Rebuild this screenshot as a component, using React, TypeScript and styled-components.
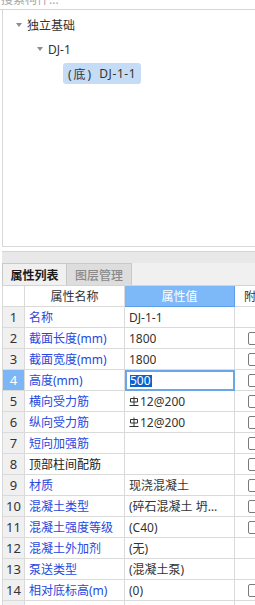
import styled, { createGlobalStyle } from 'styled-components';

const GlobalStyle = createGlobalStyle`
  html, body {
    margin: 0;
    padding: 0;
    background: #ffffff;
    overflow: hidden;
  }
  body {
    font-family: "Noto Sans", "Noto Sans CJK SC", sans-serif;
    font-size: 12px;
    color: #333333;
  }
`;

const Page = styled.div`
  width: 255px;
  height: 605px;
  overflow: hidden;
  display: flex;
  flex-direction: column;
`;

const SearchBar = styled.div`
  height: 10px;
  flex: none;
  box-sizing: border-box;
  border-bottom: 1px solid #d6d6d6;
  overflow: hidden;
`;

const SearchText = styled.div`
  margin-top: -8px;
  padding-left: 1px;
  line-height: 16px;
  color: #a6a6a6;
  white-space: nowrap;
`;

const TreePanel = styled.div`
  height: 237px;
  flex: none;
  box-sizing: border-box;
  margin-left: 2px;
  padding-top: 3px;
  border-left: 1px solid #d9d9d9;
  border-bottom: 1px solid #d9d9d9;
  background: #ffffff;
`;

const TreeRow = styled.div<{ $level: number }>`
  height: 24px;
  display: flex;
  align-items: center;
  padding-left: ${(p) => 13 + p.$level * 21}px;
  color: #333333;
  white-space: nowrap;
`;

const Caret = styled.span`
  width: 0;
  height: 0;
  margin-right: 5px;
  border-left: 3px solid transparent;
  border-right: 3px solid transparent;
  border-top: 4px solid #8c8c8c;
`;

const Selected = styled.span`
  display: flex;
  align-items: center;
  height: 21px;
  margin-top: 1px;
  margin-left: 26px;
  padding: 0 5px 0 5px;
  border-radius: 3px;
  background: #c5dcf6;
  color: #333333;
`;

const Kind = styled.span`
  letter-spacing: 2px;
`;

const Code = styled.span`
  margin-left: 6px;
  letter-spacing: 0.6px;
`;

const Gap = styled.div`
  height: 4px;
  flex: none;
`;

const Splitter = styled.div`
  height: 12px;
  flex: none;
  box-sizing: border-box;
  margin-left: 2px;
  border-top: 1px solid #d4d4d4;
  background: #e8e8e8;
`;

const TabBar = styled.div`
  height: 23px;
  flex: none;
  box-sizing: border-box;
  margin-left: 2px;
  display: flex;
  background: #f0f0f0;
  border-bottom: 1px solid #d4d4d4;
`;

const Tab = styled.div<{ $active?: boolean }>`
  width: 65px;
  box-sizing: border-box;
  display: flex;
  align-items: center;
  justify-content: center;
  border: 1px solid #c9c9c9;
  border-bottom: none;
  border-left: ${(p) => (p.$active ? '1px solid #c9c9c9' : 'none')};
  background: ${(p) => (p.$active ? '#f0f0f0' : '#dddddd')};
  color: ${(p) => (p.$active ? '#1a1a1a' : '#8a8a8a')};
  font-weight: ${(p) => (p.$active ? 600 : 500)};
`;

const Table = styled.div`
  margin-left: 2px;
  border-left: 1px solid #d9d9d9;
  flex: none;
`;

const Row = styled.div`
  display: grid;
  grid-template-columns: 22px 100px 110px 60px;
  height: 21px;
`;

const Cell = styled.div`
  box-sizing: border-box;
  height: 21px;
  border-right: 1px solid #dadada;
  border-bottom: 1px solid #dadada;
  display: flex;
  align-items: center;
  white-space: nowrap;
  overflow: hidden;
`;

const NumCell = styled(Cell)<{ $active?: boolean; $header?: boolean }>`
  justify-content: center;
  font-size: 13px;
  background: ${(p) => (p.$header ? '#ffffff' : p.$active ? '#7cb6f6' : '#f0f0f0')};
  color: ${(p) => (p.$active ? '#ffffff' : '#333333')};
`;

const HeadCell = styled(Cell)<{ $blue?: boolean }>`
  justify-content: center;
  background: ${(p) => (p.$blue ? '#7db8f8' : '#ffffff')};
  color: ${(p) => (p.$blue ? '#ffffff' : '#333333')};
  border-right-color: ${(p) => (p.$blue ? '#5c9fe8' : '#dadada')};
  border-bottom-color: ${(p) => (p.$blue ? '#5c9fe8' : '#dadada')};
`;

const ExtraHead = styled(Cell)`
  padding-left: 9px;
  border-right: none;
`;

const NameCell = styled(Cell)<{ $plain?: boolean }>`
  padding-left: 4px;
  color: ${(p) => (p.$plain ? '#222222' : '#2648e0')};
`;

const ValueCell = styled(Cell)<{ $editing?: boolean }>`
  padding-left: ${(p) => (p.$editing ? '3px' : '4px')};
  padding-right: 14px;
  color: #333333;
  border: ${(p) => (p.$editing ? '2px solid #6aa7e8' : undefined)};
`;

const ValueText = styled.span`
  overflow: hidden;
  text-overflow: ellipsis;
`;

const Picked = styled.span`
  background: #0b62cc;
  color: #ffffff;
  line-height: 12px;
  padding: 0 1px 0 0;
`;

const ExtraCell = styled(Cell)`
  padding-left: 13px;
  border-right: none;
`;

const Check = styled.span`
  width: 13px;
  height: 13px;
  box-sizing: border-box;
  border: 1px solid #7a7a7a;
  border-radius: 2px;
  background: #ffffff;
`;

const Mark = styled.svg`
  width: 10px;
  height: 10px;
  margin-right: 1px;
  flex: none;
`;

const RebarMark = () => (
  <Mark viewBox="0 0 10 10" fill="none" stroke="#333333" strokeWidth="1">
    <path d="M5 0.5V9 M1.5 2.5H8.5V6H1.5Z M0.5 9.5H9.5" />
  </Mark>
);

type Prop = {
  name: string;
  value?: string;
  rebar?: boolean;
  check?: boolean;
  plain?: boolean;
};

const props: Prop[] = [
  { name: '名称', value: 'DJ-1-1' },
  { name: '截面长度(mm)', value: '1800', check: true },
  { name: '截面宽度(mm)', value: '1800', check: true },
  { name: '高度(mm)', value: '500', check: true },
  { name: '横向受力筋', value: '12@200', rebar: true, check: true },
  { name: '纵向受力筋', value: '12@200', rebar: true, check: true },
  { name: '短向加强筋', check: true },
  { name: '顶部柱间配筋', check: true, plain: true },
  { name: '材质', value: '现浇混凝土', check: true },
  { name: '混凝土类型', value: '(碎石混凝土 坍落度35~50mm)', check: true },
  { name: '混凝土强度等级', value: '(C40)', check: true },
  { name: '混凝土外加剂', value: '(无)' },
  { name: '泵送类型', value: '(混凝土泵)' },
  { name: '相对底标高(m)', value: '(0)', check: true },
  { name: '', check: true },
];

const EDIT_ROW = 3;

export default function App() {
  return (
    <Page>
      <GlobalStyle />
      <SearchBar>
        <SearchText>搜索构件...</SearchText>
      </SearchBar>
      <TreePanel>
        <TreeRow $level={0}>
          <Caret />
          独立基础
        </TreeRow>
        <TreeRow $level={1}>
          <Caret />
          DJ-1
        </TreeRow>
        <TreeRow $level={1}>
          <Selected>
            <Kind>(底)</Kind>
            <Code>DJ-1-1</Code>
          </Selected>
        </TreeRow>
      </TreePanel>
      <Gap />
      <Splitter />
      <TabBar>
        <Tab $active>属性列表</Tab>
        <Tab>图层管理</Tab>
      </TabBar>
      <Table>
        <Row>
          <NumCell $header />
          <HeadCell>属性名称</HeadCell>
          <HeadCell $blue>属性值</HeadCell>
          <ExtraHead>附加</ExtraHead>
        </Row>
        {props.map((p, i) => (
          <Row key={i}>
            <NumCell $active={i === EDIT_ROW}>{i + 1}</NumCell>
            <NameCell $plain={p.plain}>{p.name}</NameCell>
            <ValueCell $editing={i === EDIT_ROW}>
              {i === EDIT_ROW ? (
                <Picked>{p.value}</Picked>
              ) : (
                <>
                  {p.rebar && <RebarMark />}
                  <ValueText>{p.value}</ValueText>
                </>
              )}
            </ValueCell>
            <ExtraCell>{p.check && <Check />}</ExtraCell>
          </Row>
        ))}
      </Table>
    </Page>
  );
}
